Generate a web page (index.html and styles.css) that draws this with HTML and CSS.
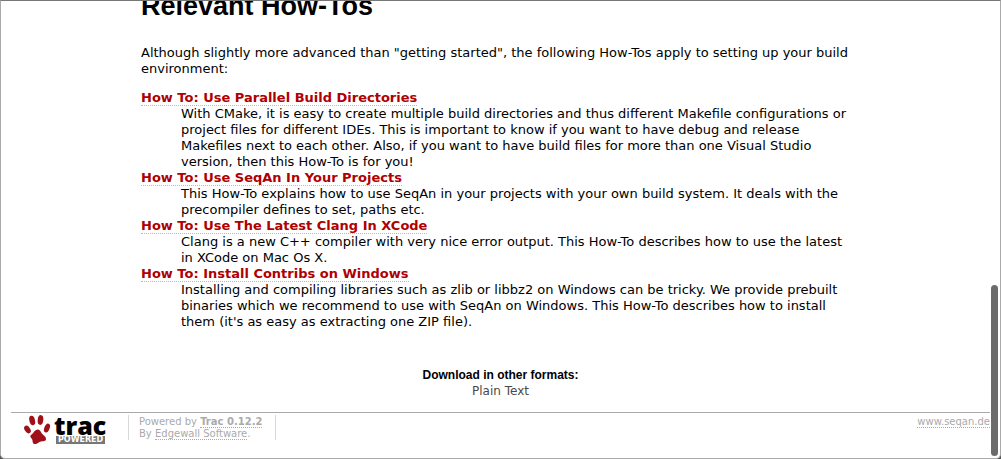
FILE: index.html
```html
<!DOCTYPE html>
<html lang="en">
<head>
<meta charset="utf-8">
<title>Relevant How-Tos</title>
<link rel="stylesheet" href="styles.css">
</head>
<body>
<div class="window">
  <main class="wiki">
    <h1 class="title">Relevant How-Tos</h1>
    <p class="intro">Although slightly more advanced than "getting started", the following How-Tos apply to setting up your build environment:</p>
    <dl class="howtos">
      <dt><a href="#parallel">How To: Use Parallel Build Directories</a></dt>
      <dd>With CMake, it is easy to create multiple build directories and thus different Makefile configurations or project files for different IDEs. This is important to know if you want to have debug and release<br>Makefiles next to each other. Also, if you want to have build files for more than one Visual Studio<br>version, then this How-To is for you!</dd>
      <dt><a href="#projects">How To: Use SeqAn In Your Projects</a></dt>
      <dd>This How-To explains how to use SeqAn in your projects with your own build system. It deals with the precompiler defines to set, paths etc.</dd>
      <dt><a href="#clang">How To: Use The Latest Clang In XCode</a></dt>
      <dd>Clang is a new C++ compiler with very nice error output. This How-To describes how to use the latest<br>in XCode on Mac Os X.</dd>
      <dt><a href="#contribs">How To: Install Contribs on Windows</a></dt>
      <dd>Installing and compiling libraries such as zlib or libbz2 on Windows can be tricky. We provide prebuilt binaries which we recommend to use with SeqAn on Windows. This How-To describes how to install<br>them (it's as easy as extracting one ZIP file).</dd>
    </dl>
  </main>
  <section class="formats">
    <h2 class="formats-title">Download in other formats:</h2>
    <a class="formats-link" href="#txt">Plain Text</a>
  </section>
  <footer class="footer">
    <a class="logo" href="#trac" aria-label="Trac Powered">
      <svg class="paw" width="28" height="30" viewBox="0 0 28 30" aria-hidden="true">
        <g fill="#a01018">
          <ellipse cx="8.200" cy="5.500" rx="2.800" ry="4.800" transform="rotate(-14 8.200 5.500)"/>
          <ellipse cx="16.500" cy="5" rx="2.800" ry="4.900" transform="rotate(6 16.500 5)"/>
          <ellipse cx="3.500" cy="14.500" rx="2.700" ry="4.200" transform="rotate(-35 3.500 14.500)"/>
          <ellipse cx="23" cy="13" rx="2.600" ry="4.700" transform="rotate(22 23 13)"/>
          <path d="M12 15C14.500 13.500 16.500 15.500 17.500 18C18.500 20 22 21 22 24C22 26.500 19 26 17 26.500C14.500 27 13 29.500 10.500 29C8 28.500 9 25.500 8 24C7 22.500 5.500 21.500 7 20C9 19 9.500 16.500 12 15Z"/>
        </g>
      </svg>
      <span class="wordmark">
        <span class="name">trac</span>
        <span class="powered">POWERED</span>
      </span>
    </a>
    <p class="credits">Powered by <a href="#about"><strong>Trac 0.12.2</strong></a><br>By <a href="#edgewall">Edgewall Software</a>.</p>
    <p class="site"><a href="#seqan">www.seqan.de</a></p>
  </footer>
  <div class="scrollbar"></div>
</div>
</body>
</html>
```
FILE: styles.css
```css
* {
  box-sizing: border-box;
}

body {
  margin: 0;
  background: #555;
  color: #000;
  font: 13px/16px Verdana, "DejaVu Sans", sans-serif;
}

.window {
  position: relative;
  display: flex;
  flex-direction: column;
  min-height: 100vh;
  padding: 0 10px;
  overflow: hidden;
  background: #fff;
  border: 1px solid #aaa;
  border-top-color: #777;
  border-radius: 0 0 5px 5px;
}

.wiki {
  padding: 0 113px 0 130px;
}

.title {
  margin: -10px 0 24px;
  font: bold 27px/30px Arial, "Liberation Sans", sans-serif;
}

.intro {
  margin: 0 0 13px;
}

.howtos {
  margin: 0;
}

.howtos dt {
  font-weight: bold;
}

.howtos dd {
  margin: 0 0 0 40px;
}

.howtos a {
  color: #b00000;
  text-decoration: none;
  border-bottom: 1px dotted #bbb;
}

.formats {
  margin-top: 37px;
  text-align: center;
  font-size: 12px;
}

.formats-title {
  margin: 0;
  font: bold 12px/16px Arial, "Liberation Sans", sans-serif;
}

.formats-link {
  color: #494949;
  text-decoration: none;
}

.footer {
  display: flex;
  align-items: flex-start;
  margin-top: 13px;
  padding-top: 2px;
  border-top: 1px solid #aaa;
  color: #aaa;
  font-size: 10px;
  line-height: 12px;
}

.footer p {
  margin: 0;
}

.footer p a {
  color: #aaa;
  text-decoration: none;
  border-bottom: 1px dotted #aaa;
}

.logo {
  display: flex;
  width: 117px;
  padding-left: 13px;
  color: #000;
  text-decoration: none;
}

.wordmark {
  display: flex;
  flex-direction: column;
  align-items: flex-start;
  margin-left: 2px;
}

.name {
  font: 800 25px/21px "Open Sans", sans-serif;
}

.powered {
  padding: 0 2px;
  margin-left: 2px;
  background: #777;
  color: #fff;
  font: bold 8px/8px "DejaVu Sans", sans-serif;
}

.footer .credits {
  padding: 1px 13px 0 10px;
  border: solid #d7d7d7;
  border-width: 0 1px;
}

.footer .site {
  margin-left: auto;
  padding-top: 1px;
}

.scrollbar {
  position: absolute;
  right: 2px;
  bottom: 2px;
  width: 7px;
  height: 171px;
  border-radius: 4px;
  background: #6b6b6b;
}
```
